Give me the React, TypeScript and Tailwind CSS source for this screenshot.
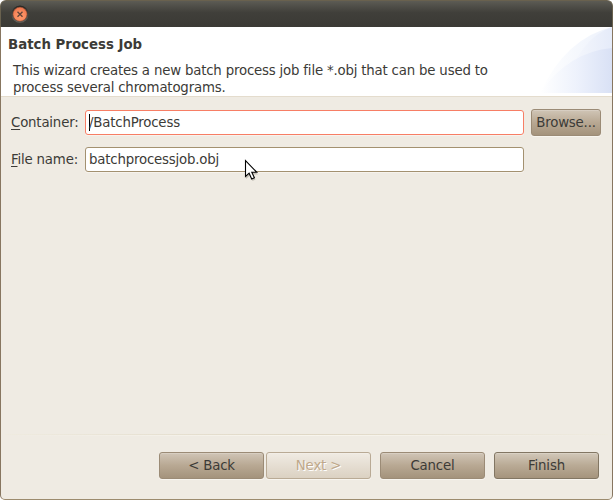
import type { ReactNode } from "react";

function WizardButton({ children, disabled, focused, className }: { children: ReactNode; disabled?: boolean; focused?: boolean; className: string }) {
  const look = disabled
    ? "border-[#b9aa95] bg-linear-to-b from-[#f0ebe3] to-[#dbd1c2] text-[#bfa88a] [text-shadow:1px_1px_0_#fff]"
    : focused
      ? "border-[#827663] bg-linear-to-b from-[#d2c8b9] via-[#b9aa95] to-[#a5947d] text-[#3c3b37]"
      : "border-[#9b8b76] bg-linear-to-b from-[#d0c5b6] via-[#b8a893] to-[#a4937c] text-[#3c3b37]";
  return (
    <button disabled={disabled} className={`h-[27px] shrink-0 whitespace-nowrap rounded-[3px] border p-0 leading-[25px] shadow-[0_1px_0_#f8f5ef,inset_0_1px_0_rgba(255,255,255,0.18)] ${look} ${className}`}>
      {children}
    </button>
  );
}

function TitleBar() {
  return (
    <div className="h-[27px] shrink-0 rounded-t-[6px] border-x border-t border-[#69614e] bg-linear-to-b from-[#5c5b54] via-[#403f3a] via-45% to-[#3b3a35] pl-[10px] pt-[4px]">
      <svg width="19" height="19" viewBox="0 0 19 19">
        <defs>
          <radialGradient id="close" cx="50%" cy="65%" r="60%">
            <stop offset="0" stopColor="#ff9a6a" />
            <stop offset=".55" stopColor="#fb8c60" />
            <stop offset="1" stopColor="#ec764d" />
          </radialGradient>
          <linearGradient id="ring" x2="0" y2="1">
            <stop stopColor="#252522" />
            <stop offset="1" stopColor="#686760" />
          </linearGradient>
        </defs>
        <circle cx="9" cy="9.2" r="8.6" fill="url(#ring)" />
        <circle cx="9" cy="9.2" r="7.1" fill="url(#close)" stroke="#733b27" strokeWidth=".5" />
        <path d="M6.5 6.7l5 5m0-5l-5 5" stroke="#63453a" strokeWidth="1.4" />
      </svg>
    </div>
  );
}

function Banner() {
  return (
    <svg className="h-[66px] w-[76px] shrink-0" viewBox="0 0 76 66">
      <defs>
        <linearGradient id="arcA" gradientUnits="userSpaceOnUse" x1="4" x2="60" y1="0" y2="0">
          <stop stopColor="#fff" />
          <stop offset="1" stopColor="#f0f4fc" />
        </linearGradient>
        <linearGradient id="arcB" gradientUnits="userSpaceOnUse" x1="25" x2="76" y1="0" y2="0">
          <stop stopColor="#fafbfe" />
          <stop offset="1" stopColor="#e5ebf9" />
        </linearGradient>
        <linearGradient id="arcC" gradientUnits="userSpaceOnUse" x1="4" x2="76" y1="0" y2="0">
          <stop stopColor="#fff" />
          <stop offset=".5" stopColor="#eef2fc" />
          <stop offset="1" stopColor="#d9e1f5" />
        </linearGradient>
      </defs>
      <path d="M4 66Q30 11 76 0v66z" fill="url(#arcA)" />
      <path d="M25 66Q44 10 76 0v66z" fill="url(#arcB)" />
      <path d="M4 66Q32 25 76 21v45z" fill="url(#arcC)" />
    </svg>
  );
}

function Field({ label, value, active }: { label: string; value: string; active?: boolean }) {
  return (
    <>
      <label className="w-[74px] shrink-0 whitespace-nowrap">
        <span className="underline decoration-1 underline-offset-[2px]">{label[0]}</span>{label.slice(1)}
      </label>
      <div className={`flex h-[25px] w-[439px] shrink-0 items-center rounded-[3px] border bg-white pl-[3px] shadow-[0_1px_0_#f7f3ed] ${active ? "border-[#f77e65]" : "border-[#a39170]"}`}>
        {active && <span className="-mr-px h-[17px] w-px bg-black" />}
        <span>{value}</span>
      </div>
    </>
  );
}

export default function App() {
  return (
    <div className="relative h-[500px] w-[613px] bg-white font-['DejaVu_Sans',sans-serif] text-[13.33px] leading-[17px] tracking-[-0.19px] text-[#3c3b37] [font-variant-ligatures:none]">
      <div className="flex h-full flex-col">
        <TitleBar />
        <div className="flex min-h-0 flex-1 flex-col rounded-b-[5px] border-x border-b border-x-[#877660] border-b-[#9c8b6e] bg-[#efebe3]">
          <header className="flex h-[70px] shrink-0 justify-between border-b border-[#e4dccd] bg-white">
            <div className="shrink-0 whitespace-nowrap pl-[7px] pt-[9px]">
              <h1 className="font-bold tracking-normal">Batch Process Job</h1>
              <p className="pl-[5px] pt-[9px]">This wizard creates a new batch process job file *.obj that can be used to<br />process several chromatograms.</p>
            </div>
            <Banner />
          </header>
          <main className="flex-1 pl-[10px] pt-[12px]">
            <div className="flex h-[27px] items-center">
              <Field label="Container:" value="/BatchProcess" active />
              <WizardButton className="ml-[7px] w-[70px]">Browse...</WizardButton>
            </div>
            <div className="mt-[10px] flex h-[27px] items-center">
              <Field label="File name:" value="batchprocessjob.obj" />
            </div>
          </main>
          <div className="mx-[4px] h-[2px] bg-linear-to-r from-[#efebe0] via-[#dfd7c5] to-[#efebe0]">
            <div className="mt-px h-px bg-linear-to-r from-[#efebe3] via-[#f8f5ed] to-[#efebe3]" />
          </div>
          <footer className="flex h-[63px] shrink-0 pl-[158px] pt-[16px]">
            <WizardButton className="w-[105px]">&lt; Back</WizardButton>
            <WizardButton disabled className="ml-[2px] w-[105px]">Next &gt;</WizardButton>
            <WizardButton className="ml-[9px] w-[105px]">Cancel</WizardButton>
            <WizardButton focused className="ml-[9px] w-[105px]">Finish</WizardButton>
          </footer>
        </div>
      </div>
      <svg className="absolute left-[244px] top-[159px]" width="16" height="22" viewBox="0 0 16 22">
        <path d="M2 3v17l4-3.5 2.5 5.5 3-1.5-2.5-5h5z" fill="#77736b" opacity=".35" />
        <path d="M1.5 1.5v16l3.6-3.3 2.6 5.8 2.7-1.2-2.6-5.5h5z" fill="white" stroke="black" strokeWidth="1.1" />
      </svg>
    </div>
  );
}
